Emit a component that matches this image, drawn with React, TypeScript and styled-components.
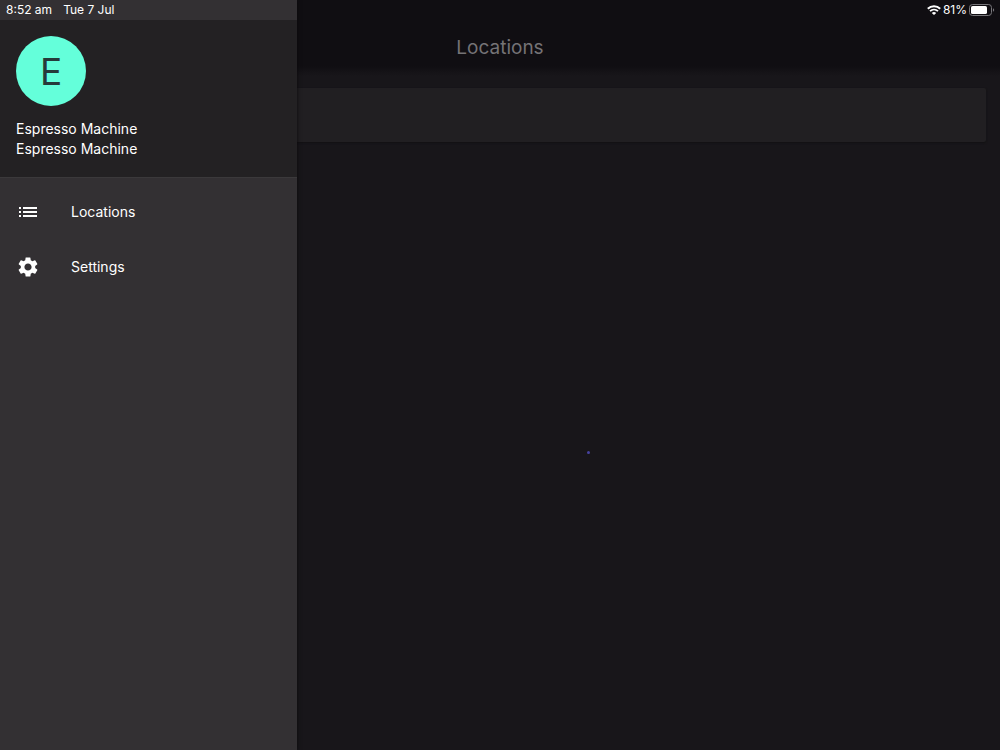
import React from "react";
import styled, { createGlobalStyle } from "styled-components";
import { MdList, MdSettings } from "react-icons/md";

const GlobalStyle = createGlobalStyle`
  * { box-sizing: border-box; }
  body {
    margin: 0;
    background: #18161a;
    color: #ffffff;
    font-family: Inter, "Liberation Sans", sans-serif;
    font-size: 14px;
  }
`;

const Screen = styled.div`
  position: relative;
  min-height: 100vh;
  overflow: hidden;
`;

const StatusBar = styled.div`
  position: absolute;
  inset: 0 0 auto;
  z-index: 2;
  display: flex;
  align-items: center;
  justify-content: space-between;
  height: 20px;
  padding: 0 5px 0 6px;
  font-size: 12px;
  line-height: 20px;
`;

const StatusGroup = styled.div<{ $gap: number }>`
  display: flex;
  align-items: center;
  gap: ${(p) => p.$gap}px;
`;

const Main = styled.main`
  min-height: 100vh;
  background: #18161a;
`;

const AppBar = styled.header`
  display: flex;
  align-items: center;
  justify-content: center;
  height: 76px;
  padding-top: 20px;
  background: linear-gradient(#100e12 66px, #18161a);
`;

const Title = styled.h1`
  margin: 0;
  color: #757376;
  font-size: 19px;
  font-weight: 400;
  line-height: 24px;
`;

const Content = styled.section`
  padding: 12px 14px;
`;

const Card = styled.div`
  height: 54px;
  border-radius: 2px;
  background: #211f22;
  box-shadow: 0 1px 2px #121113;
`;

const Spinner = styled.div`
  position: absolute;
  left: 58.7%;
  top: 60.1%;
  width: 3px;
  height: 3px;
  border-radius: 50%;
  background: #4642a0;
`;

const Drawer = styled.aside`
  position: absolute;
  inset: 0 auto 0 0;
  z-index: 1;
  width: 297px;
  padding-top: 20px;
  background: #333033;
  box-shadow: 0 0 4px #0a090b;
`;

const Account = styled.div`
  padding: 16px 16px 18px;
  border-bottom: 1px solid #3b393b;
  background: #232123;
`;

const Avatar = styled.div`
  display: flex;
  align-items: center;
  justify-content: center;
  width: 70px;
  height: 70px;
  margin-bottom: 13px;
  border-radius: 50%;
  background: #64ffda;
  color: #263a3a;
  font-size: 37px;
`;

const AccountLine = styled.div`
  line-height: 20px;
`;

const NavLink = styled.a`
  display: flex;
  align-items: center;
  gap: 31px;
  height: 55px;
  padding: 0 16px;
  color: #ffffff;
  text-decoration: none;
`;

const Nav = styled.nav`
  padding-top: 6px;
`;

const WifiIcon = () => (
  <svg width="14" height="10" viewBox="0 0 14 10" fill="none" stroke="#fff" aria-label="Wi-Fi">
    <path d="M.8 3.7C4.2.4 9.8.4 13.2 3.7" strokeWidth="2" />
    <path d="M3 6.2c2.3-2.1 5.7-2.1 8 0" strokeWidth="1.8" />
    <path d="M7 10 4.8 7.9c1.3-1.1 3.1-1.1 4.4 0z" fill="#fff" stroke="none" />
  </svg>
);

const BatteryIcon = () => (
  <svg width="26" height="12" viewBox="0 0 26 12" fill="none" aria-label="Battery">
    <rect x=".5" y=".5" width="22" height="11" rx="3" stroke="#77767a" />
    <rect x="2" y="2" width="16" height="8" rx="1.6" fill="#fff" />
    <path d="M24 4.2c1.6.6 1.6 3 0 3.6z" fill="#77767a" />
  </svg>
);

export default function App() {
  return (
    <Screen>
      <GlobalStyle />
      <StatusBar>
        <StatusGroup $gap={11}>
          <span>8:52 am</span>
          <span>Tue 7 Jul</span>
        </StatusGroup>
        <StatusGroup $gap={2}>
          <WifiIcon />
          <span>81%</span>
          <BatteryIcon />
        </StatusGroup>
      </StatusBar>
      <Drawer>
        <Account>
          <Avatar>E</Avatar>
          <AccountLine>Espresso Machine</AccountLine>
          <AccountLine>Espresso Machine</AccountLine>
        </Account>
        <Nav>
          <NavLink href="#locations">
            <MdList size={24} />
            Locations
          </NavLink>
          <NavLink href="#settings">
            <MdSettings size={24} />
            Settings
          </NavLink>
        </Nav>
      </Drawer>
      <Main>
        <AppBar>
          <Title>Locations</Title>
        </AppBar>
        <Content>
          <Card />
        </Content>
        <Spinner role="progressbar" aria-label="Loading" />
      </Main>
    </Screen>
  );
}
